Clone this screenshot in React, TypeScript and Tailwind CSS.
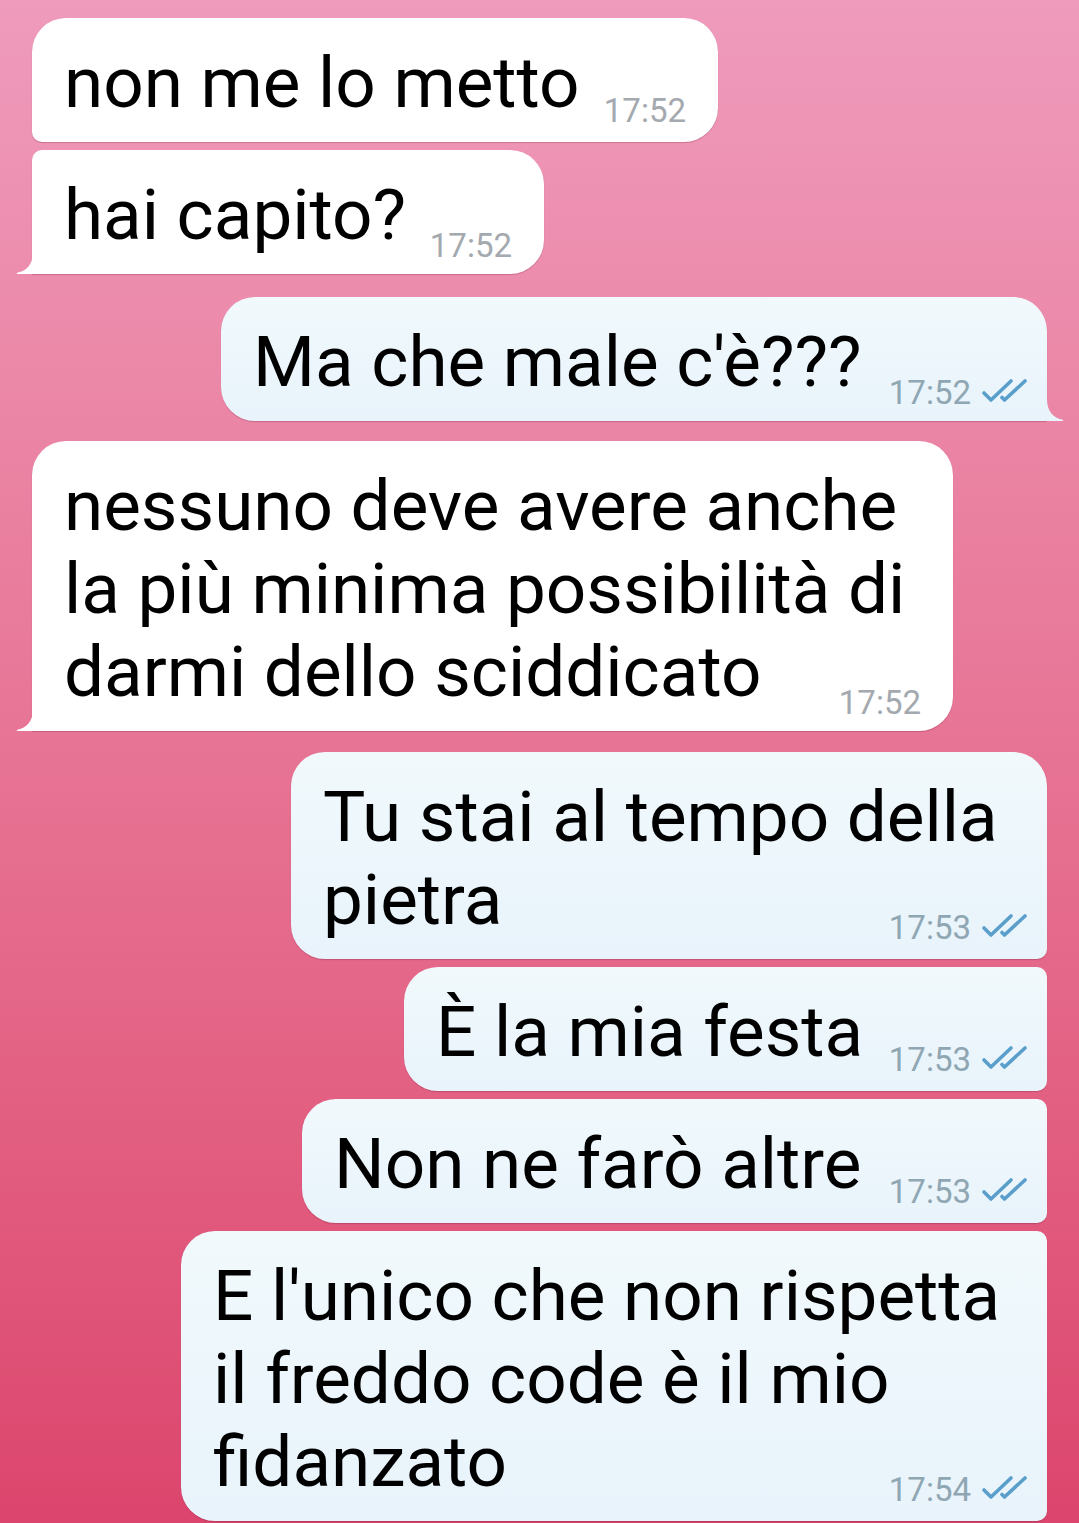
import type { ReactNode } from "react";

type Msg = {
  out: boolean;
  w: string;
  corners: string;
  gap: string;
  tail?: boolean;
  time: string;
  text: ReactNode;
};

const messages: Msg[] = [
  {
    out: false,
    w: "w-[686px]",
    corners: "rounded-tl-[34px] rounded-tr-[34px] rounded-br-[34px] rounded-bl-[10px]",
    gap: "mt-[18px]",
    time: "17:52",
    text: "non me lo metto",
  },
  {
    out: false,
    w: "w-[512px]",
    corners: "rounded-tl-[10px] rounded-tr-[34px] rounded-br-[34px] rounded-bl-none",
    gap: "mt-[8px]",
    tail: true,
    time: "17:52",
    text: "hai capito?",
  },
  {
    out: true,
    w: "w-[826px]",
    corners: "rounded-tl-[34px] rounded-tr-[34px] rounded-bl-[34px] rounded-br-none",
    gap: "mt-[23px]",
    tail: true,
    time: "17:52",
    text: "Ma che male c'è???",
  },
  {
    out: false,
    w: "w-[921px]",
    corners: "rounded-tl-[34px] rounded-tr-[34px] rounded-br-[34px] rounded-bl-none",
    gap: "mt-[20px]",
    tail: true,
    time: "17:52",
    text: (
      <>
        nessuno deve avere anche
        <br />
        la più minima possibilità di
        <br />
        darmi dello sciddicato
      </>
    ),
  },
  {
    out: true,
    w: "w-[756px]",
    corners: "rounded-tl-[34px] rounded-tr-[34px] rounded-bl-[34px] rounded-br-[10px]",
    gap: "mt-[21px]",
    time: "17:53",
    text: (
      <>
        Tu stai al tempo della
        <br />
        pietra
      </>
    ),
  },
  {
    out: true,
    w: "w-[643px]",
    corners: "rounded-tl-[34px] rounded-tr-[10px] rounded-bl-[34px] rounded-br-[10px]",
    gap: "mt-[8px]",
    time: "17:53",
    text: "È la mia festa",
  },
  {
    out: true,
    w: "w-[745px]",
    corners: "rounded-tl-[34px] rounded-tr-[10px] rounded-bl-[34px] rounded-br-[10px]",
    gap: "mt-[8px]",
    time: "17:53",
    text: "Non ne farò altre",
  },
  {
    out: true,
    w: "w-[866px]",
    corners: "rounded-tl-[34px] rounded-tr-[10px] rounded-bl-[34px] rounded-br-[10px]",
    gap: "mt-[8px]",
    time: "17:54",
    text: (
      <>
        E l'unico che non rispetta
        <br />
        il freddo code è il mio
        <br />
        fidanzato
      </>
    ),
  },
];

function Checks() {
  return (
    <svg width="48" height="26" viewBox="0 0 48 26" fill="none" className="mb-[5px]">
      <path
        d="M4 16 L11 23 L31 4"
        stroke="#5a9fcb"
        strokeWidth="3.6"
        strokeLinecap="round"
        strokeLinejoin="round"
      />
      <path
        d="M22 20.5 L24.5 23 L45 4"
        stroke="#5a9fcb"
        strokeWidth="3.6"
        strokeLinecap="round"
        strokeLinejoin="round"
      />
    </svg>
  );
}

function Tail({ out }: { out: boolean }) {
  if (out) {
    return (
      <svg
        width="20"
        height="36"
        viewBox="0 0 20 36"
        className="absolute bottom-0 right-[-17px]"
      >
        <path d="M3 0 L3 14 C3 27 10 33 18 34.5 Q20 35 19 36 L0 36 L0 0 Z" fill="#e8f3fb" />
      </svg>
    );
  }
  return (
    <svg
      width="20"
      height="36"
      viewBox="0 0 20 36"
      className="absolute bottom-0 left-[-16px]"
    >
      <path d="M17 0 L17 14 C17 27 10 33 2 34.5 Q0 35 1 36 L20 36 L20 0 Z" fill="#ffffff" />
    </svg>
  );
}

function Bubble({ m }: { m: Msg }) {
  return (
    <div
      className={`relative ${m.gap} ${m.w} ${m.corners} pl-[32px] pt-[23px] pb-[18px] text-[71px] leading-[83px] text-black shadow-[0_1px_1px_rgba(90,20,45,0.25)] ${
        m.out
          ? "self-end mr-[32px] bg-linear-to-b from-[#f1f9fc] to-[#e8f3fb]"
          : "self-start ml-[32px] bg-white"
      }`}
    >
      {m.tail && <Tail out={m.out} />}
      <div>{m.text}</div>
      <div
        className={`absolute flex items-center text-[33px] leading-[33px] ${
          m.tail ? "bottom-[12px]" : "bottom-[15px]"
        } ${m.out ? "right-[19px] text-[#8fa6b3]" : "right-[32px] text-[#a3a9ae]"}`}
      >
        <span>{m.time}</span>
        {m.out && (
          <span className="ml-[9px] flex">
            <Checks />
          </span>
        )}
      </div>
    </div>
  );
}

export default function App() {
  return (
    <div
      className="flex h-[1523px] w-[1079px] flex-col overflow-hidden bg-linear-to-b from-[#ef9bbc] to-[#dc456d]"
      style={{ fontFamily: "Roboto, 'Noto Sans', sans-serif" }}
    >
      {messages.map((m, i) => (
        <Bubble key={i} m={m} />
      ))}
    </div>
  );
}
